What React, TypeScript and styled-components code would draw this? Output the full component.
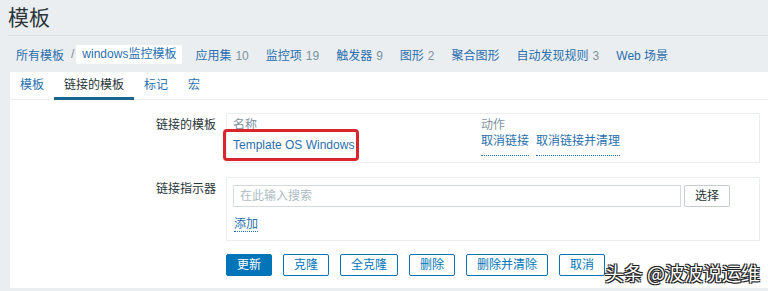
import styled, { createGlobalStyle } from 'styled-components'

const GlobalStyle = createGlobalStyle`
  html, body {
    margin: 0;
    padding: 0;
    background: #ebeef0;
    overflow: hidden;
  }
  body {
    font-family: 'Liberation Sans', 'Noto Sans CJK SC', sans-serif;
    font-size: 12px;
    color: #1f2c33;
  }
`

const Page = styled.div`
  position: relative;
  width: 768px;
  height: 291px;
  overflow: hidden;
`

const Header = styled.div`
  height: 35px;
  margin: 0 0 0 8px;
  border-bottom: 1px solid #dde2e5;
  display: flex;
  align-items: center;
`

const Title = styled.h1`
  margin: 0;
  font-size: 21px;
  font-weight: normal;
  color: #2a3438;
  line-height: 24px;
  padding-top: 1px;
`

const Nav = styled.div`
  height: 36px;
  display: flex;
  align-items: center;
  padding-left: 16px;
`

const Crumbs = styled.div`
  display: flex;
  align-items: center;
  margin-right: 13px;
`

const Slash = styled.span`
  color: #768d99;
  margin: 0 2px 0 7px;
`

const Current = styled.span`
  background: #fff;
  color: #2a6fae;
  padding: 0 6px;
  height: 19px;
  line-height: 19px;
`

const NavLink = styled.a<{ $first?: boolean }>`
  color: #2a6fae;
  text-decoration: none;
  margin-left: ${p => (p.$first ? '0' : '17px')};
  white-space: nowrap;
`

const Count = styled.span`
  color: #7d939e;
  margin-left: 4px;
`

const Panel = styled.div`
  margin-left: 10px;
  width: 780px;
  background: #fff;
  height: 216px;
`

const Tabs = styled.div`
  display: flex;
  height: 27px;
  border-bottom: 1px solid #ebeef0;
`

const Tab = styled.div<{ $active?: boolean }>`
  padding: 0 10px;
  line-height: 25px;
  height: 24px;
  padding-top: 1px;
  border-bottom: 3px solid ${p => (p.$active ? '#1a638d' : 'transparent')};
  color: ${p => (p.$active ? '#2a3438' : '#2a6fae')};
`

const Form = styled.div`
  display: grid;
  grid-template-columns: 206px 534px;
  column-gap: 10px;
  row-gap: 14px;
  padding-top: 13px;
`

const Label = styled.div`
  text-align: right;
  padding-top: 3px;
  line-height: 18px;
  color: #2a3438;
`

const Box = styled.div`
  position: relative;
  border: 1px solid #ebeef0;
  box-sizing: border-box;
`

const LinkedBox = styled(Box)`
  height: 50px;
  padding: 2px 6px 0;
`

const Table = styled.div`
  display: grid;
  grid-template-columns: 248px 1fr;
`

const HeadCell = styled.div`
  color: #7d939e;
  line-height: 18px;
`

const Cell = styled.div`
  line-height: 22px;
  display: flex;
  gap: 7px;
`

const Link = styled.a`
  color: #2a6fae;
  text-decoration: none;
`

const DottedLink = styled.a`
  color: #2a6fae;
  text-decoration: none;
  border-bottom: 1px dotted #2a6fae;
  line-height: 14px;
`

const Highlight = styled.div`
  position: absolute;
  left: -4px;
  top: 15px;
  width: 136px;
  height: 32px;
  border: 3px solid #d9262c;
  border-radius: 4px;
  box-sizing: border-box;
`

const SearchBox = styled(Box)`
  height: 64px;
  padding: 7px 6px 0;
`

const SearchRow = styled.div`
  display: flex;
  gap: 3px;
`

const Input = styled.div`
  width: 448px;
  height: 22px;
  box-sizing: border-box;
  border: 1px solid #d3dadd;
  color: #acbbc2;
  padding-left: 6px;
  line-height: 20px;
`

const GreyButton = styled.div`
  height: 22px;
  box-sizing: border-box;
  border: 1px solid #c5cdd1;
  border-radius: 2px;
  padding: 0 10px;
  line-height: 20px;
  color: #2a3438;
`

const AddRow = styled.div`
  margin-top: 10px;
  padding-left: 1px;
`

const Buttons = styled.div`
  grid-column: 2;
  display: flex;
  gap: 11px;
  margin-top: -1px;
`

const Button = styled.div<{ $primary?: boolean }>`
  height: 22px;
  box-sizing: border-box;
  border: 1px solid #0275b8;
  border-radius: 2px;
  padding: 0 10px;
  line-height: 20px;
  background: ${p => (p.$primary ? '#0275b8' : '#fff')};
  color: ${p => (p.$primary ? '#fff' : '#0275b8')};
`

const Watermark = styled.div`
  position: absolute;
  right: 8px;
  bottom: 6px;
  font-family: 'Noto Sans CJK SC', sans-serif;
  font-size: 19px;
  line-height: 24px;
  color: #fff;
  text-shadow: -1px -1px 0 #222, 1px -1px 0 #222, -1px 1px 0 #222, 1px 1px 0 #222, 0 0 2px #000;
`

const navItems: [string, string | null][] = [
  ['应用集', '10'],
  ['监控项', '19'],
  ['触发器', '9'],
  ['图形', '2'],
  ['聚合图形', null],
  ['自动发现规则', '3'],
  ['Web 场景', null],
]

export default function App() {
  return (
    <Page>
      <GlobalStyle />
      <Header>
        <Title>模板</Title>
      </Header>
      <Nav>
        <Crumbs>
          <NavLink $first>所有模板</NavLink>
          <Slash>/</Slash>
          <Current>windows监控模板</Current>
        </Crumbs>
        {navItems.map(([name, count], i) => (
          <NavLink key={name} $first={i === 0}>
            {name}
            {count && <Count>{count}</Count>}
          </NavLink>
        ))}
      </Nav>
      <Panel>
        <Tabs>
          <Tab>模板</Tab>
          <Tab $active>链接的模板</Tab>
          <Tab>标记</Tab>
          <Tab>宏</Tab>
        </Tabs>
        <Form>
          <Label>链接的模板</Label>
          <LinkedBox>
            <Table>
              <HeadCell>名称</HeadCell>
              <HeadCell>动作</HeadCell>
              <Cell>
                <Link>Template OS Windows</Link>
              </Cell>
              <Cell>
                <DottedLink>取消链接</DottedLink>
                <DottedLink>取消链接并清理</DottedLink>
              </Cell>
            </Table>
            <Highlight />
          </LinkedBox>

          <Label>链接指示器</Label>
          <SearchBox>
            <SearchRow>
              <Input>在此输入搜索</Input>
              <GreyButton>选择</GreyButton>
            </SearchRow>
            <AddRow>
              <DottedLink>添加</DottedLink>
            </AddRow>
          </SearchBox>

          <Buttons>
            <Button $primary>更新</Button>
            <Button>克隆</Button>
            <Button>全克隆</Button>
            <Button>删除</Button>
            <Button>删除并清除</Button>
            <Button>取消</Button>
          </Buttons>
        </Form>
      </Panel>
      <Watermark>头条 @波波说运维</Watermark>
    </Page>
  )
}
